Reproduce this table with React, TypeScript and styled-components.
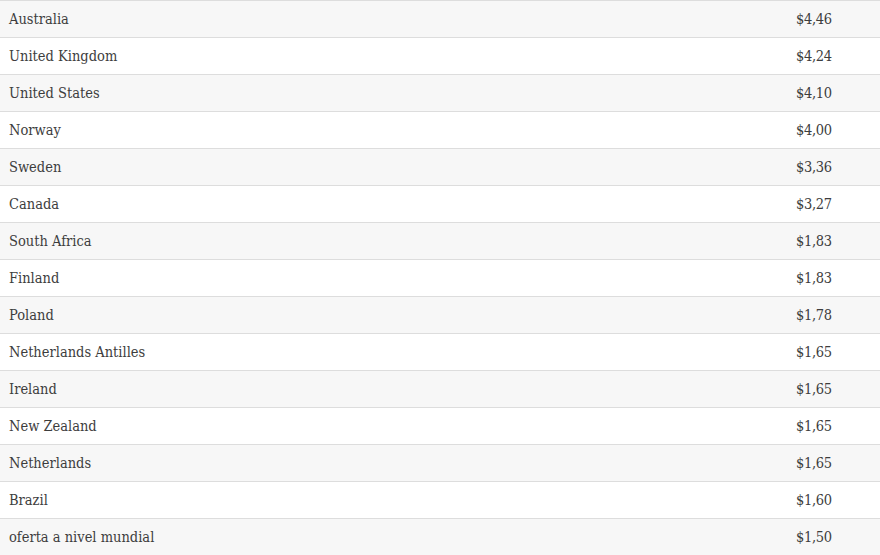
import React from 'react';
import styled, { createGlobalStyle } from 'styled-components';

const GlobalStyle = createGlobalStyle`
  html, body {
    margin: 0;
    padding: 0;
    background: #fff;
  }
`;

const Table = styled.table`
  width: 880px;
  border-collapse: collapse;
  border-spacing: 0;
  font-family: "DejaVu Serif Condensed", "DejaVu Serif", serif;
  font-size: 14.5px;
  color: #3d3d3d;
`;

const Row = styled.tr<{ $striped: boolean }>`
  background: ${({ $striped }) => ($striped ? '#f7f7f7' : '#fff')};
`;

const Cell = styled.td<{ $price?: boolean }>`
  border-top: 1px solid #ddd;
  padding: 8px;
  padding-left: ${({ $price }) => ($price ? '7px' : '9px')};
  line-height: 20px;
  height: 20px;
  vertical-align: middle;
  width: ${({ $price }) => ($price ? '76px' : 'auto')};
  letter-spacing: ${({ $price }) => ($price ? '-0.3px' : '0')};
`;

const rates: [string, string][] = [
  ['Australia', '$4,46'],
  ['United Kingdom', '$4,24'],
  ['United States', '$4,10'],
  ['Norway', '$4,00'],
  ['Sweden', '$3,36'],
  ['Canada', '$3,27'],
  ['South Africa', '$1,83'],
  ['Finland', '$1,83'],
  ['Poland', '$1,78'],
  ['Netherlands Antilles', '$1,65'],
  ['Ireland', '$1,65'],
  ['New Zealand', '$1,65'],
  ['Netherlands', '$1,65'],
  ['Brazil', '$1,60'],
  ['oferta a nivel mundial', '$1,50'],
];

const App: React.FC = () => (
  <>
    <GlobalStyle />
    <Table>
      <tbody>
        {rates.map(([country, price], i) => (
          <Row key={country} $striped={i % 2 === 0}>
            <Cell>{country}</Cell>
            <Cell $price>{price}</Cell>
          </Row>
        ))}
      </tbody>
    </Table>
  </>
);

export default App;
